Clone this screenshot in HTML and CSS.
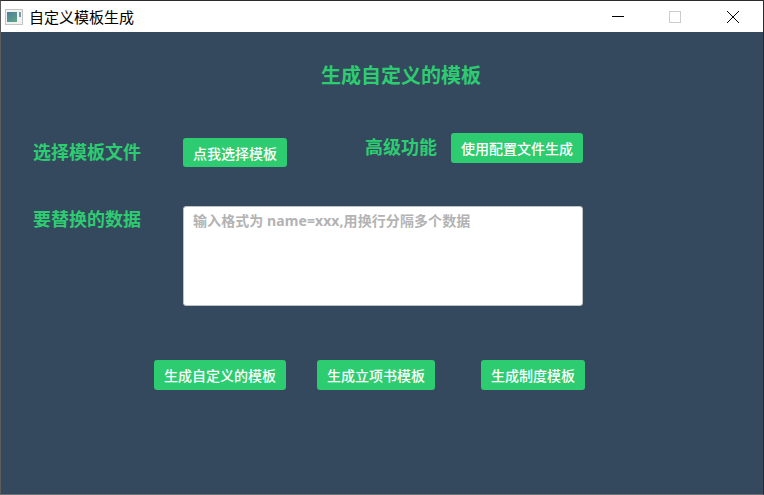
FILE: index.html
```html
<!DOCTYPE html>
<html lang="zh-CN">
<head>
  <meta charset="UTF-8">
  <title>自定义模板生成</title>
  <link rel="stylesheet" href="styles.css">
</head>
<body>
  <div class="window">
    <div class="titlebar">
      <svg class="app-icon" width="18" height="16" viewBox="0 0 18 16">
        <defs>
          <linearGradient id="pane" x1="0" y1="0" x2="0.6" y2="1">
            <stop offset="0" stop-color="#4d7f9c"/>
            <stop offset="1" stop-color="#5fa088"/>
          </linearGradient>
        </defs>
        <rect x="0.5" y="0.5" width="17" height="15" fill="#f2f2f2" stroke="#c4c4c4"/>
        <rect x="2" y="3" width="10" height="10" fill="url(#pane)"/>
        <rect x="14" y="3" width="2" height="5" fill="#7d98a8"/>
      </svg>
      <span class="window-title">自定义模板生成</span>
      <div class="window-controls">
        <svg class="ctl" width="12" height="12" viewBox="0 0 12 12"><path d="M0 5.5H12" stroke="#000" fill="none"/></svg>
        <svg class="ctl ctl-max" width="12" height="12" viewBox="0 0 12 12"><rect x="0.5" y="0.5" width="11" height="11" stroke="#ccc" fill="none"/></svg>
        <svg class="ctl" width="12" height="12" viewBox="0 0 12 12"><path d="M0 0L12 12M12 0L0 12" stroke="#000" fill="none"/></svg>
      </div>
    </div>

    <div class="content">
      <h1 class="heading">生成自定义的模板</h1>

      <div class="row row-file">
        <label class="label label-file">选择模板文件</label>
        <button type="button" class="btn btn-pick">点我选择模板</button>
        <label class="label label-adv">高级功能</label>
        <button type="button" class="btn btn-config">使用配置文件生成</button>
      </div>

      <div class="row row-data">
        <label class="label label-data" for="data">要替换的数据</label>
        <textarea id="data" class="data-input" placeholder="输入格式为 name=xxx,用换行分隔多个数据"></textarea>
      </div>

      <div class="row row-actions">
        <button type="button" class="btn">生成自定义的模板</button>
        <button type="button" class="btn">生成立项书模板</button>
        <button type="button" class="btn">生成制度模板</button>
      </div>
    </div>
  </div>
</body>
</html>
```

FILE: styles.css
```css
html, body { margin: 0; padding: 0; }
body { width: 764px; height: 495px; overflow: hidden; font-family: "Liberation Sans", "Noto Sans CJK SC", sans-serif; }

.window { box-sizing: border-box; width: 764px; height: 495px; display: flex; flex-direction: column; border: 1px solid #2b2b2b; border-left-color: #5c5c5c; border-bottom-color: #6f6f6f; background: #34495e; }

.titlebar { flex: none; height: 31px; display: flex; align-items: center; background: #fff; padding-left: 4px; }
.app-icon { flex: none; margin-right: 7px; }
.window-title { font-family: "Noto Sans CJK SC", sans-serif; font-size: 15px; color: #000; margin-left: -1px; }
.window-controls { margin-left: auto; display: flex; gap: 46px; padding-right: 24px; }
.ctl { display: block; }
.ctl-max { margin-left: -1px; }

.content { flex: 1; padding-top: 29px; }
.heading { margin: 0; padding-left: 320px; height: 30px; line-height: 30px; font-size: 20px; font-weight: bold; color: #2ecc71; }

.label { font-size: 18px; line-height: 26px; font-weight: bold; color: #2ecc71; }

.btn { box-sizing: border-box; height: 30px; padding: 0 10px; border: none; border-radius: 3px; background: #2ecc71; color: #fff; font-family: inherit; font-size: 14px; font-weight: 500; white-space: nowrap; }

.row { display: flex; align-items: flex-start; }

.row-file { margin-top: 42px; padding-left: 32px; }
.label-file { margin-top: 7px; width: 150px; }
.btn-pick { margin-top: 5px; height: 29px; }
.label-adv { margin-left: 78px; margin-top: 2px; }
.btn-config { margin-left: 14px; }

.row-data { margin-top: 40px; padding-left: 32px; }
.label-data { margin-top: 0; width: 150px; }
.data-input { box-sizing: border-box; width: 400px; height: 100px; padding: 3px 9px; margin: -1px 0 0; border: 1px solid #bdc3c7; border-radius: 3px; background: #fff; font-family: "Noto Sans", "Noto Sans CJK SC", sans-serif; font-size: 14px; font-weight: bold; letter-spacing: .08px; resize: none; outline: none; }
.data-input::placeholder { color: #b3b3b3; opacity: 1; }

.row-actions { margin-top: 54px; padding-left: 153px; gap: 31px; }
.row-actions .btn:last-child { margin-left: 15px; }
```
